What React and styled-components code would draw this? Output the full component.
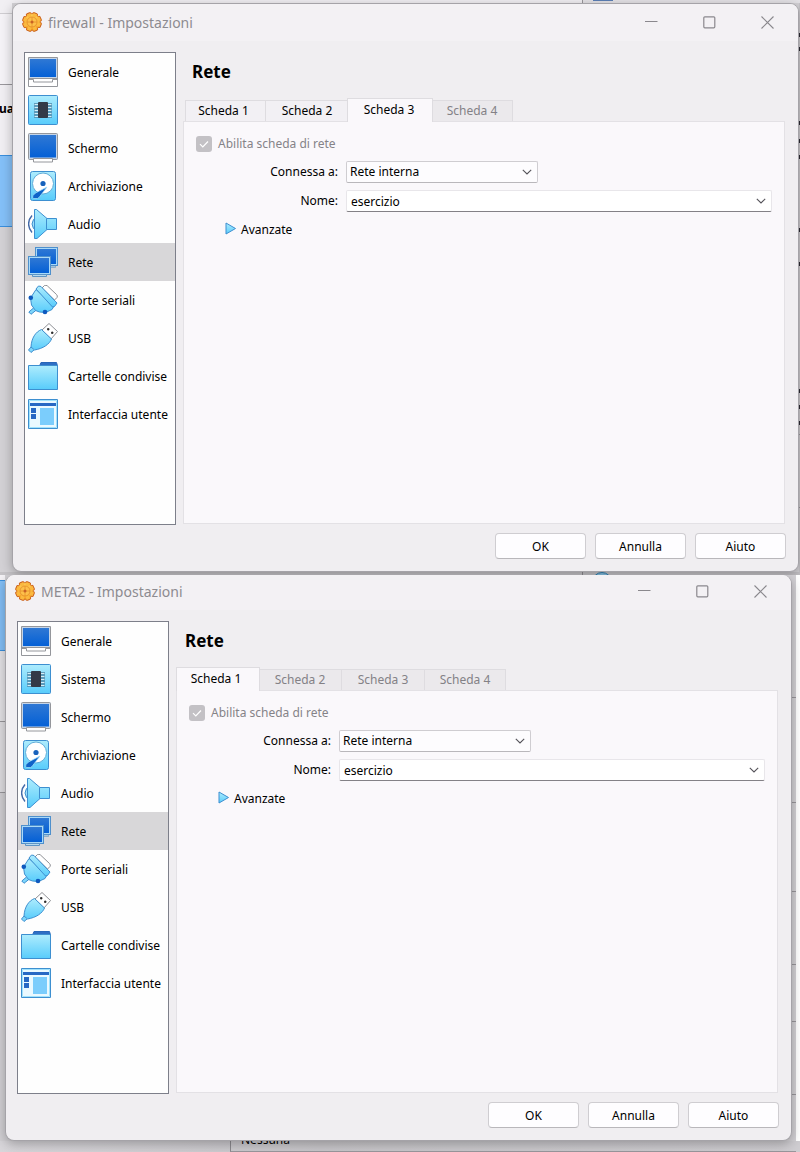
import React, { useId } from "react";
import styled, { createGlobalStyle, css } from "styled-components";

const Global = createGlobalStyle`
  *, *::before, *::after { box-sizing: border-box; }
  body {
    margin: 0;
    background: #d3d1d5;
    font-family: "Noto Sans", "Liberation Sans", sans-serif;
    font-size: 12px;
    line-height: 16px;
    color: #000;
  }
  button, input, select { font: inherit; color: inherit; margin: 0; }
`;

const Desktop = styled.main`
  min-width: 640px;
`;

const Screen = styled.section`
  display: grid;
  grid-template-columns: ${(p) => p.$left}px minmax(0, 1fr) ${(p) => p.$right}px;
  overflow: hidden;
`;

const TopEdge = styled.div`
  grid-column: 1 / -1;
  display: flex;
  height: 3px;
  background: #e4e2e6;
`;

const LightSpan = styled.div`
  width: 583px;
  background: #f1eff3;
  border-right: 1px solid #99979c;
`;

const BlueChip = styled.div`
  width: 20px;
  height: 1px;
  margin-left: 10px;
  background: #5b7fb5;
`;

const BottomEdge = styled.div`
  grid-column: 1 / -1;
  display: flex;
  height: 3px;
  overflow: hidden;
  background: #c4c2c6;
`;

const GreySpan = styled.div`
  width: 583px;
  border-right: 1px solid #8c8a8f;
`;

const BlueArc = styled.div`
  width: 20px;
  height: 20px;
  margin-left: 9px;
  border: 1px solid #2f7fb0;
  border-radius: 50%;
  background: #86bfe0;
`;

const Strip = styled.div`
  display: flex;
  flex-direction: column;
  overflow: hidden;
  background: ${(p) => p.$bg || "#d3d1d5"};
`;

const Segment = styled.div`
  flex: 0 0 auto;
  height: ${(p) => p.$h}px;
  background: ${(p) => p.$bg || "transparent"};
  border-bottom: 1px solid ${(p) => p.$line || "#99979c"};
  font-weight: 700;
  line-height: 48px;
  text-indent: -1px;
`;

const Speck = styled.div`
  flex: 0 0 auto;
  height: 4px;
  margin-top: ${(p) => p.$gap}px;
  background: #2b2a33;
`;

const RightEdge = styled.div`
  display: grid;
  padding-right: 4px;
  background: #fff;
`;

const FooterRow = styled.div`
  grid-column: 1 / -1;
  display: flex;
  height: 12px;
  padding: 0 4px 1px 230px;
  background: linear-gradient(90deg, #d8d6da, #c8c6ca 40%, #cfcdd1);
`;

const FooterCell = styled.div`
  flex: 1;
  display: flex;
  align-items: flex-end;
  overflow: hidden;
  padding: 0 0 3px 10px;
  border-left: 1px solid #8c8a8f;
  border-bottom: 1px solid #99979c;
`;

const Dialog = styled.section`
  position: relative;
  display: flex;
  flex-direction: column;
  overflow: hidden;
  border: 1px solid #a5a3a8;
  border-top-width: ${(p) => (p.$cut ? 0 : 1)}px;
  border-radius: 9px;
  background: #f0eef1;
  box-shadow: 0 3px 12px rgba(0, 0, 0, 0.28);
`;

const TitleBar = styled.header`
  display: flex;
  align-items: center;
  height: ${(p) => (p.$cut ? 35 : 37)}px;
  padding: 0 2px ${(p) => (p.$cut ? 3 : 1)}px 9px;
  background: #f3f1f4;
`;

const Title = styled.h1`
  flex: 1;
  margin: 0 0 0 6px;
  padding-top: 2px;
  font-size: 14px;
  line-height: 20px;
  font-weight: 400;
  color: #8d8b90;
`;

const CaptionButton = styled.button`
  display: grid;
  place-items: center;
  width: 58px;
  height: 32px;
  padding: 0;
  border: 0;
  background: none;
  color: #8a888d;
`;

const Body = styled.div`
  display: grid;
  grid-template-columns: 152px minmax(0, 1fr);
  column-gap: 7px;
  padding: 11px 13px 8px 11px;
`;

const Sidebar = styled.nav`
  min-height: 473px;
  border: 1px solid #7d7f8a;
  background: #fefefe;
`;

const NavItem = styled.a`
  display: flex;
  align-items: center;
  gap: 10px;
  height: 38px;
  padding-left: 3px;
  color: inherit;
  text-decoration: none;
  white-space: nowrap;
  background: ${(p) => (p.$current ? "#d8d7d9" : "transparent")};
`;

const NavText = styled.span`
  padding-top: 2px;
`;

const Content = styled.div`
  display: flex;
  flex-direction: column;
  padding-bottom: 1px;
`;

const PageTitle = styled.h2`
  margin: 8px 0 14px 9px;
  font-size: 17px;
  line-height: 24px;
  font-weight: 700;
`;

const TabList = styled.div`
  display: grid;
  grid-template-columns: repeat(4, 83px);
  align-items: end;
  height: 23px;
`;

const Tab = styled.button`
  height: 21px;
  padding: 0;
  border: 1px solid #dedce0;
  border-left-width: ${(p) => (p.$joined ? 0 : 1)}px;
  border-bottom: 0;
  background: #f2f0f4;
  color: #000;
  &:first-child { margin-left: 2px; padding-right: 4px; }
  &:last-child { margin-right: 2px; }
  &:disabled { background: #ebe9ec; color: #838186; }
  ${(p) =>
    p.$active &&
    css`
      position: relative;
      height: 24px;
      margin: 0 -1px -1px -2px;
      padding: 0 2px 1px 0;
      border-left-width: 1px;
      background: #faf8fb;
      &:first-child { margin-left: 0; }
    `}
`;

const Panel = styled.div`
  flex: 1;
  padding: 14px 12px 14px 13px;
  border: 1px solid #e3e1e5;
  background: #faf8fb;
`;

const CheckLine = styled.label`
  display: flex;
  align-items: center;
  gap: 6px;
  height: 16px;
  margin-left: -1px;
  color: #858388;
`;

const CheckBox = styled.input`
  appearance: none;
  width: 16px;
  height: 16px;
  border-radius: 3px;
  background: #c3c1c5;
`;

const CheckCell = styled.span`
  display: grid;
  & > * { grid-area: 1 / 1; }
  svg { position: relative; pointer-events: none; }
`;

const Form = styled.div`
  display: grid;
  grid-template-columns: 141px minmax(0, 1fr);
  align-items: center;
  gap: 7px 8px;
  margin-top: 9px;
`;

const FieldLabel = styled.label`
  text-align: right;
`;

const Field = styled.div`
  display: grid;
  align-items: center;
  width: ${(p) => (p.$width ? p.$width + "px" : "100%")};
  & > * { grid-area: 1 / 1; }
  svg { position: relative; justify-self: end; margin-right: 6px; pointer-events: none; }
`;

const Select = styled.select`
  appearance: none;
  width: 100%;
  height: 22px;
  padding: 0 24px 0 3px;
  border: 1px solid #cfcdd1;
  border-bottom-color: #b9b7bb;
  border-radius: 2px;
  background: #fdfcfe;
`;

const ComboInput = styled.input`
  width: 100%;
  height: 22px;
  padding: 0 24px 0 4px;
  border: 1px solid #e8e6ea;
  border-bottom-color: #838186;
  border-radius: 2px;
  background: #fff;
`;

const Expander = styled.button`
  display: flex;
  align-items: center;
  gap: 4px;
  height: 16px;
  margin: 9px 0 0 28px;
  padding: 0;
  border: 0;
  background: none;
`;

const Actions = styled.footer`
  display: flex;
  justify-content: flex-end;
  gap: 9px;
  padding: 0 12px 12px;
`;

const PushButton = styled.button`
  width: 91px;
  height: 26px;
  padding: 2px 0 0;
  border: 1px solid #cfcdd1;
  border-bottom-color: #b9b7bb;
  border-radius: 4px;
  background: #fefdff;
`;

function Icon({ children, size = 30 }) {
  return (
    <svg width={size} height={size} viewBox={`0 0 ${size} ${size}`} fill="none" aria-hidden="true">
      {children}
    </svg>
  );
}

const LINE = "#3d8fd0";

const HiddenSvg = styled.svg`
  position: absolute;
`;

function IconDefs() {
  return (
    <HiddenSvg width="0" height="0" aria-hidden="true">
      <defs>
        <linearGradient id="screenBlue" x1="0" y1="0" x2="0" y2="1">
          <stop offset="0" stopColor="#2f78d4" />
          <stop offset="1" stopColor="#0460d6" />
        </linearGradient>
        <linearGradient id="sky" x1="0" y1="0" x2="0" y2="1">
          <stop offset="0" stopColor="#aeecfd" />
          <stop offset="1" stopColor="#58ccfb" />
        </linearGradient>
        <linearGradient id="gold" x1="0" y1="0" x2="0" y2="1">
          <stop offset="0" stopColor="#ffd35a" />
          <stop offset="1" stopColor="#f39a1e" />
        </linearGradient>
      </defs>
    </HiddenSvg>
  );
}

function GearIcon() {
  const teeth = [22, 67, 112, 157, 202, 247, 292, 337];
  return (
    <Icon size={20}>
      {teeth.map((a) => (
        <rect key={a} x="7.5" y="0.6" width="5" height="4" rx="1.2" fill="#f8ae35" stroke="#cc6420" strokeWidth="1.1" transform={`rotate(${a} 10 10)`} />
      ))}
      <circle cx="10" cy="10" r="8.3" fill="url(#gold)" stroke="#d9772a" strokeWidth=".8" />
      {teeth.map((a) => (
        <rect key={a} x="8.1" y="1.2" width="3.800" height="3.500" fill="#fbb93f" transform={`rotate(${a} 10 10)`} />
      ))}
      <circle cx="10" cy="10" r="5" fill="#fdc04a" stroke="#e58f2c" strokeWidth=".8" />
      <path d="M10 5v10M5 10h10" stroke="#e58f2c" strokeWidth=".8" />
      <circle cx="10" cy="10" r="1.500" fill="#c96224" />
    </Icon>
  );
}

const icons = {
  generale: (
    <Icon>
      <path d="M.5 .5h29v29H.5z" fill="#fff" stroke="#94969b" />
      <path d="M.5 21.5h29" stroke="#94969b" />
      <path d="M1 1h28v20H1z" fill="#c5d5e8" />
      <path d="M2 2h26v18H2z" fill="url(#screenBlue)" />
      <path d="M.5 22.500h5v2.500h19v-2.500h5" stroke="#94969b" />
    </Icon>
  ),
  sistema: (
    <Icon>
      <rect x=".5" y=".5" width="29" height="29" rx="1" fill="url(#sky)" stroke={LINE} />
      <path d="M6 9.500h18M6 12.500h18M6 15.500h18M6 18.500h18M6 21.500h18" stroke="#4d86a6" strokeWidth="2.400" />
      <path d="M6.500 9.500h17M6.500 12.500h17M6.500 15.500h17M6.500 18.500h17M6.500 21.500h17" stroke="#d6f0fa" strokeWidth="1.200" />
      <rect x="10" y="7" width="10" height="16" rx="1" fill="#333a47" />
    </Icon>
  ),
  schermo: (
    <Icon>
      <rect x=".5" y=".5" width="29" height="26" rx="1" fill="#c5d5e8" stroke="#94969b" />
      <path d="M2 2h26v22.500H2z" fill="url(#screenBlue)" />
      <path d="M5.500 25.500h19v3.500h-19z" fill="#fff" stroke="#94969b" />
    </Icon>
  ),
  archiviazione: (
    <Icon>
      <rect x="2.500" y=".5" width="25" height="29" rx="2" fill="url(#sky)" stroke={LINE} />
      <circle cx="15" cy="12.500" r="10.500" fill="#fff" stroke="#62add8" />
      <circle cx="15" cy="12.500" r="2.600" fill="#1762bc" />
      <path d="M19 16 11 26.500 9.500 27.500H5.500q-1.500-1-.5-3l2.500-2.500z" fill="#0f63c9" stroke="#a8e2fb" strokeWidth=".7" />
    </Icon>
  ),
  audio: (
    <Icon>
      <path d="M4 6.500c-4.500 5-4.500 12 0 17" stroke="#4369a8" strokeWidth="1.400" />
      <path d="M6.500 10.500H5.500q-3 4.500 0 9h1" fill="#9edffa" stroke={LINE} />
      <path d="M6.500.500h2l10.500 9h9.500v11H19L9 29.500H6.500z" fill="url(#sky)" stroke={LINE} strokeLinejoin="round" />
      <path d="M18.500 9.500v11" stroke={LINE} />
    </Icon>
  ),
  rete: (
    <Icon>
      <rect x="7.500" y=".5" width="22" height="18" fill="#a9d9f8" stroke="#4f90cc" />
      <path d="M9 2h19v15H9z" fill="url(#screenBlue)" />
      <path d="M22 19h5.500v1.500H22z" fill="#b8daee" stroke="#6e93b5" strokeWidth=".6" />
      <rect x=".5" y="9.500" width="22" height="18" fill="#a9d9f8" stroke="#4f90cc" />
      <path d="M2 11h19v15H2z" fill="url(#screenBlue)" />
      <path d="M4.500 27.500h14v2h-14z" fill="#b8daee" stroke="#5e94c4" />
    </Icon>
  ),
  porte: (
    <Icon>
      <path d="m14 3 2.500-2.500q1.500-.8 3 .5l9 8.500q1.500 1.500.5 3L26.500 15z" fill="#fff" stroke="#8e9095" />
      <path d="M5.500 23 .8 27l2.200 2.300 5-4" fill="#7dd6fb" stroke={LINE} />
      <path d="M8 4.500 18.500 14 26 21l-2 3.500-6.500 3-6-.5-4-1.500L3.500 20l-1-7z" fill="url(#sky)" stroke={LINE} />
      <path d="m8 4 2.500-3 2.500.5 16 16.500-2.500 3.500-2 .5z" fill="url(#sky)" stroke={LINE} strokeLinejoin="round" />
      <circle cx="2.800" cy="12.800" r="2.300" fill="#0e59be" />
      <circle cx="17" cy="27" r="2.300" fill="#0e59be" />
    </Icon>
  ),
  usb: (
    <Icon>
      <path d="m14 7 7-6.500 8.500 8-6.500 7.500z" fill="#fff" stroke="#8e9095" />
      <path d="M19.500 5.500h1.500v1.500h-1.500zM23.500 9H25v1.500h-1.500z" fill="#222" stroke="#333" strokeWidth=".8" />
      <path d="m3 24-2.500 3L3 29.500 6 27" fill="#7dd6fb" stroke={LINE} />
      <path d="M13.500 6.500 23.500 16c-2 5-8 9.500-17 11L3 24C3.500 15 7.500 9 13.500 6.500z" fill="url(#sky)" stroke={LINE} />
    </Icon>
  ),
  cartelle: (
    <Icon>
      <path d="M11.500 5 13 1.500h15.500L29.500 5z" fill="#2e6fc4" stroke="#2866b8" />
      <path d="M.5 4.500h29v24H.5z" fill="url(#sky)" stroke={LINE} />
    </Icon>
  ),
  interfaccia: (
    <Icon>
      <path d="M.5.5h29v29H.5z" fill="#eaf9ff" stroke={LINE} />
      <path d="M1.500 1.500h27v27h-27z" stroke="#a0e2fc" />
      <path d="M2 4h26v3H2zM3 9h5v5H3zM3 15h5v5H3z" fill="#2768c4" />
      <path d="M12 9h14v17H12z" fill="#7bcdfc" />
    </Icon>
  ),
};

const sections = [
  ["generale", "Generale"],
  ["sistema", "Sistema"],
  ["schermo", "Schermo"],
  ["archiviazione", "Archiviazione"],
  ["audio", "Audio"],
  ["rete", "Rete"],
  ["porte", "Porte seriali"],
  ["usb", "USB"],
  ["cartelle", "Cartelle condivise"],
  ["interfaccia", "Interfaccia utente"],
];

function Chevron() {
  return (
    <svg width="10" height="6" viewBox="0 0 10 6" fill="none" aria-hidden="true">
      <path d="m.8.8 4.200 4.200L9.200.8" stroke="#55535a" strokeWidth="1.100" />
    </svg>
  );
}

function SettingsDialog({ machine, activeTab, enabledTabs, cut }) {
  const id = useId();
  return (
    <Dialog $cut={cut}>
      <TitleBar $cut={cut}>
        <GearIcon />
        <Title>{machine} - Impostazioni</Title>
        <CaptionButton aria-label="Riduci">
          <svg width="13" height="13" viewBox="0 0 13 13"><path d="M0 5.500h12.500" stroke="currentColor" /></svg>
        </CaptionButton>
        <CaptionButton aria-label="Ingrandisci">
          <svg width="13" height="13" viewBox="0 0 13 13"><rect x=".8" y=".8" width="11" height="11" rx="1" fill="none" stroke="currentColor" strokeWidth="1.200" /></svg>
        </CaptionButton>
        <CaptionButton aria-label="Chiudi">
          <svg width="13" height="13" viewBox="0 0 13 13"><path d="m.5.5 12 12m0-12-12 12" stroke="currentColor" strokeWidth="1.100" /></svg>
        </CaptionButton>
      </TitleBar>
      <Body>
        <Sidebar>
          {sections.map(([key, label]) => (
            <NavItem key={key} href={`#${key}`} $current={key === "rete"}>
              {icons[key]}
              <NavText>{label}</NavText>
            </NavItem>
          ))}
        </Sidebar>
        <Content>
          <PageTitle>Rete</PageTitle>
          <TabList role="tablist">
            {[1, 2, 3, 4].map((n) => (
              <Tab
                key={n}
                role="tab"
                aria-selected={n === activeTab}
                $active={n === activeTab}
                $joined={n > 1}
                disabled={!enabledTabs.includes(n)}
              >
                Scheda {n}
              </Tab>
            ))}
          </TabList>
          <Panel role="tabpanel">
            <CheckLine>
              <CheckCell>
                <CheckBox type="checkbox" defaultChecked disabled />
                <svg width="16" height="16" viewBox="0 0 16 16" fill="none" aria-hidden="true">
                  <path d="m4 8.200 2.800 2.800L12 5.500" stroke="#fff" strokeWidth="1.200" />
                </svg>
              </CheckCell>
              Abilita scheda di rete
            </CheckLine>
            <Form>
              <FieldLabel htmlFor={id + "net"}>Connessa a:</FieldLabel>
              <Field $width={192}>
                <Select id={id + "net"} defaultValue="Rete interna">
                  <option>Rete interna</option>
                </Select>
                <Chevron />
              </Field>
              <FieldLabel htmlFor={id + "name"}>Nome:</FieldLabel>
              <Field>
                <ComboInput id={id + "name"} type="text" defaultValue="esercizio" />
                <Chevron />
              </Field>
            </Form>
            <Expander aria-expanded="false">
              <svg width="12" height="14" viewBox="0 0 12 14" aria-hidden="true">
                <path d="M1 1v11l9.500-5.500z" fill="url(#sky)" stroke={LINE} strokeLinejoin="round" />
              </svg>
              <NavText>Avanzate</NavText>
            </Expander>
          </Panel>
        </Content>
      </Body>
      <Actions>
        <PushButton>OK</PushButton>
        <PushButton>Annulla</PushButton>
        <PushButton>Aiuto</PushButton>
      </Actions>
    </Dialog>
  );
}

export default function App() {
  return (
    <Desktop>
      <Global />
      <IconDefs />
      <Screen $left={12} $right={1}>
        <TopEdge>
          <LightSpan />
          <BlueChip />
        </TopEdge>
        <Strip>
          <Segment $h={11} $bg="#f1eff3" $line="#cfcdd1" />
          <Segment $h={71} $bg="#f5f3f7" />
          <Segment $h={71} $bg="#f1eff3" $line="#3a8fdd">ua</Segment>
          <Segment $h={71} $bg="#84c0f8" $line="#3a8fdd" />
        </Strip>
        <SettingsDialog machine="firewall" activeTab={3} enabledTabs={[1, 2, 3]} />
        <Strip $bg="#c8c6ca">
          {[30, 10, 70, 14, 12, 69, 30, 123, 12, 12].map((gap, i) => (
            <Speck key={i} $gap={gap} />
          ))}
          <Segment $h={10} />
          <Segment $h={73} />
        </Strip>
        <BottomEdge>
          <GreySpan />
          <BlueArc />
        </BottomEdge>
      </Screen>
      <Screen $left={5} $right={8}>
        <Strip>
          <Segment $h={6} $bg="#f5f3f7" $line="#3a8fdd" />
          <Segment $h={70} $bg="#84c0f8" $line="#3a8fdd" />
          <Segment $h={71} $bg="#e6e4e8" />
          <Segment $h={71} $bg="#e0dee2" />
        </Strip>
        <SettingsDialog machine="META2" activeTab={1} enabledTabs={[1]} cut />
        <RightEdge>
          <Strip>
            <Segment $h={123} />
            <Segment $h={105} />
            <Segment $h={89} />
            <Segment $h={73} />
            <Segment $h={57} />
            <Segment $h={73} />
          </Strip>
        </RightEdge>
        <FooterRow>
          <FooterCell>Nessuna</FooterCell>
        </FooterRow>
      </Screen>
    </Desktop>
  );
}
